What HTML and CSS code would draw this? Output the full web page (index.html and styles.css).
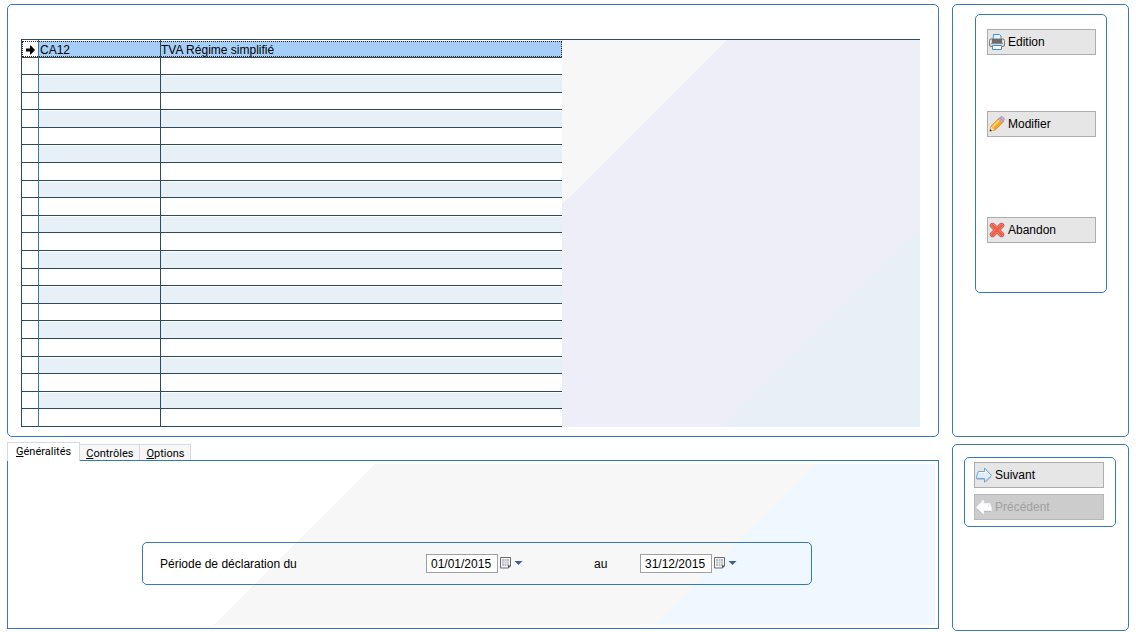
FILE: index.html
```html
<!DOCTYPE html>
<html lang="fr">
<head>
    <meta charset="UTF-8">
    <meta name="viewport" content="width=device-width, initial-scale=1.0">
    <title>Déclaration TVA</title>
    <link rel="stylesheet" href="styles.css">
</head>
<body>
    <main class="window">
        <section class="panel list-panel">
            <div class="list-area">
                <table class="list" aria-label="Déclarations">
                    <colgroup>
                        <col class="col-marker">
                        <col class="col-code">
                        <col class="col-label">
                    </colgroup>
                    <tbody>
                        <tr class="selected">
                            <td>
                                <svg class="marker" viewBox="0 0 10 10" aria-hidden="true"><path d="M1 3.500h4V.5h.8L10 5 5.800 9.500H5v-3H1z"/></svg>
                            </td>
                            <td>CA12</td>
                            <td>TVA Régime simplifié</td>
                        </tr>
                        <tr><td></td><td></td><td></td></tr>
                        <tr><td></td><td></td><td></td></tr>
                        <tr><td></td><td></td><td></td></tr>
                        <tr><td></td><td></td><td></td></tr>
                        <tr><td></td><td></td><td></td></tr>
                        <tr><td></td><td></td><td></td></tr>
                        <tr><td></td><td></td><td></td></tr>
                        <tr><td></td><td></td><td></td></tr>
                        <tr><td></td><td></td><td></td></tr>
                        <tr><td></td><td></td><td></td></tr>
                        <tr><td></td><td></td><td></td></tr>
                        <tr><td></td><td></td><td></td></tr>
                        <tr><td></td><td></td><td></td></tr>
                        <tr><td></td><td></td><td></td></tr>
                        <tr><td></td><td></td><td></td></tr>
                        <tr><td></td><td></td><td></td></tr>
                        <tr><td></td><td></td><td></td></tr>
                        <tr><td></td><td></td><td></td></tr>
                        <tr><td></td><td></td><td></td></tr>
                        <tr><td></td><td></td><td></td></tr>
                        <tr><td></td><td></td><td></td></tr>
                    </tbody>
                </table>
                <div class="list-rest"></div>
            </div>
        </section>

        <aside class="panel actions-panel">
            <div class="panel actions">
                <button type="button" class="btn">
                    <svg class="icon" viewBox="0 0 16 16" aria-hidden="true">
                        <path d="M4.500 .5h6l1.500 1.500V6h-8z" fill="#e4f3ff" stroke="#4d8fc4"/>
                        <rect x=".5" y="5" width="15" height="7.500" rx="1.500" fill="#d6d6d6" stroke="#7c7c7c"/>
                        <path d="M3 5h10v4H3z" fill="#6a6a6a"/>
                        <path d="M2 9.500h12" stroke="#8d8d8d"/>
                        <path d="M3.500 11.500h9v4h-9z" fill="#f4faff" stroke="#4d8fc4"/>
                        <path d="M1.500 6.500v3M14.500 6.500v3" stroke="#f2f2f2"/>
                    </svg>
                    Edition
                </button>
                <button type="button" class="btn edit">
                    <svg class="icon" viewBox="0 0 16 16" aria-hidden="true">
                        <path d="M1 15l1.200-5 8-8 4 4-8 8z" fill="#f9a51c" stroke="#d08220" stroke-width=".8"/>
                        <path d="M3.500 11l7.500-7.500" stroke="#ffd873" stroke-width="1.800"/>
                        <path d="M1 15l1.200-4.500 3.500 3.500z" fill="#f3dfb4"/>
                        <path d="M.6 15.400l.7-2.300 1.600 1.600z" fill="#333"/>
                        <path d="M9.300 3.100l1.500-1.500 3.800 3.800-1.500 1.500z" fill="#b8b8b8" stroke="#8c8c8c" stroke-width=".5"/>
                        <path d="M10.900 1.500L12 .6q.8-.4 1.500.1l1.900 1.900q.5.800-.1 1.500l-.8 1z" fill="#dda0cf" stroke="#a777a0" stroke-width=".5"/>
                    </svg>
                    Modifier
                </button>
                <button type="button" class="btn cancel">
                    <svg class="icon" viewBox="0 0 16 16" aria-hidden="true">
                        <path d="M3.500 3.500l9 9M12.500 3.500l-9 9" stroke="#b94a43" stroke-width="5.400" stroke-linecap="round"/>
                        <path d="M3.500 3.500l9 9M12.500 3.500l-9 9" stroke="#f6a597" stroke-width="4" stroke-linecap="round"/>
                        <path d="M3.500 3.500l9 9M12.500 3.500l-9 9" stroke="#f45b41" stroke-width="3" stroke-linecap="round"/>
                    </svg>
                    Abandon
                </button>
            </div>
        </aside>

        <section class="details">
            <div class="tabs" role="tablist">
                <button type="button" role="tab" class="tab active" aria-selected="true"><u>G</u>énéralités</button>
                <button type="button" role="tab" class="tab" aria-selected="false"><u>C</u>ontrôles</button>
                <button type="button" role="tab" class="tab" aria-selected="false"><u>O</u>ptions</button>
            </div>
            <div class="tab-page" role="tabpanel">
                <form class="panel period">
                    <label for="date-from">Période de déclaration du</label>
                    <div class="date">
                        <input type="text" id="date-from" value="01/01/2015">
                        <button type="button" class="picker" aria-label="Choisir la date de début">
                            <svg viewBox="0 0 24 12" aria-hidden="true">
                                <path d="M.5.500h10v8.500l-2 2h-8z" fill="#f4f4f6" stroke="#70686c"/>
                                <path d="M2 2h7v7H2z" fill="#b9c0cc"/>
                                <path d="M2 4.500h7M2 6.500h7M4.500 2v7M6.500 2v7" stroke="#f4f4f6" stroke-width=".5"/>
                                <path d="M8 11V8.500h3z" fill="#4d4448"/>
                                <path d="M14.500 4h8l-4 4z" fill="#41608f"/>
                            </svg>
                        </button>
                    </div>
                    <label for="date-to">au</label>
                    <div class="date">
                        <input type="text" id="date-to" value="31/12/2015">
                        <button type="button" class="picker" aria-label="Choisir la date de fin">
                            <svg viewBox="0 0 24 12" aria-hidden="true">
                                <path d="M.5.500h10v8.500l-2 2h-8z" fill="#f4f4f6" stroke="#70686c"/>
                                <path d="M2 2h7v7H2z" fill="#b9c0cc"/>
                                <path d="M2 4.500h7M2 6.500h7M4.500 2v7M6.500 2v7" stroke="#f4f4f6" stroke-width=".5"/>
                                <path d="M8 11V8.500h3z" fill="#4d4448"/>
                                <path d="M14.500 4h8l-4 4z" fill="#41608f"/>
                            </svg>
                        </button>
                    </div>
                </form>
            </div>
        </section>

        <aside class="panel nav-panel">
            <div class="panel nav">
                <button type="button" class="btn">
                    <svg class="icon" viewBox="0 0 16 16" aria-hidden="true">
                        <path d="M2.500 4.500Q.5 7.500.5 11.500h8V15L15.500 8.500 8.500 1v3.500z" fill="#dceefc" stroke="#6ea3d2"/>
                        <path d="M3 5.500h6.500V3.500l4.500 5" fill="none" stroke="#fff"/>
                        <path d="M1 12.500h7M9.500 15.500l5.500-5.500" fill="none" stroke="#a9b4bd" stroke-width=".7"/>
                    </svg>
                    Suivant
                </button>
                <button type="button" class="btn" disabled>
                    <svg class="icon" viewBox="0 0 16 16" aria-hidden="true">
                        <path d="M13.500 4.500q2 3 2 7h-8V15L.5 8.500 7.500 1v3.500z" fill="#fff" stroke="#f4f4f8"/>
                        <path d="M12.500 6.500v1M8 12.500h7M1.500 10.500L6.500 15.500" fill="none" stroke="#b4b4bc" stroke-width=".8"/>
                    </svg>
                    Précédent
                </button>
            </div>
        </aside>
    </main>
</body>
</html>
```
FILE: styles.css
```css
* {
    box-sizing: border-box;
}

body {
    margin: 0;
    background: #fff;
    color: #000;
    font-family: "Liberation Sans", Arial, sans-serif;
    font-size: 12px;
    line-height: 14px;
}

button, input {
    font: inherit;
    color: inherit;
}

.window {
    display: grid;
    grid-template-columns: 1fr 177px;
    grid-template-rows: auto 1fr;
    gap: 5px 13px;
    min-height: 100vh;
    padding: 4px 7px 1px;
}

.panel {
    border: 1px solid #3779b5;
    border-radius: 5px;
}

/* List */
.list-panel {
    padding: 34px 18px 9px 13px;
}

.list-area {
    display: flex;
    border-top: 1px solid #2c4a5c;
}

.list {
    table-layout: fixed;
    width: 541px;
    border-collapse: separate;
    border-spacing: 0;
    border-left: 1px solid #2c4a5c;
}

.col-marker {
    width: 17px;
}

.col-code {
    width: 122px;
}

.list td {
    height: 18px;
    padding: 2px 0 0 1px;
    border-bottom: 1px solid #2c4a5c;
    white-space: nowrap;
}

.list tr:nth-child(2) td,
.list tr:nth-child(5n+4) td,
.list tr:nth-child(5n+6) td {
    height: 17px;
}

.list td:first-child {
    border-right: 1px solid #3779b5;
}

.list td:nth-child(2) {
    border-right: 1px solid #2c4a5c;
}

.list td:last-child {
    padding-left: 0;
}

.list tr:nth-child(odd) td:not(:first-child) {
    background: #e7eff7;
    box-shadow: inset 0 1px #fff;
}

.list tr.selected:nth-child(odd) td:not(:first-child) {
    background: #a5cff7;
}

.selected {
    position: relative;
}

/* focus rectangle over the whole row */
.selected td:last-child::after {
    content: "";
    position: absolute;
    inset: 1px 0;
    border: 1px dotted #40200a;
}

.marker {
    display: block;
    width: 10px;
    height: 10px;
    margin-left: 2px;
}

.list-rest {
    flex: 1;
    background: linear-gradient(135deg, #f7f7f7 116px, #eeeef8 116px, #eeeef8 387px, #e7eff7 387px);
}

/* Buttons on the right */
.actions-panel {
    padding: 9px 21px 9px 22px;
}

.actions {
    display: flex;
    flex-direction: column;
    padding: 14px 10px 49px 11px;
}

.btn {
    display: flex;
    align-items: center;
    gap: 3px;
    width: 100%;
    height: 26px;
    padding: 0 1px;
    border: 1px solid #adadad;
    background: #e6e6e6;
}

.btn:disabled {
    border-color: #b9b9b9;
    background: #ccc;
    color: #a0a0a0;
}

.edit {
    margin-top: 56px;
}

.cancel {
    margin-top: 80px;
}

.icon {
    width: 16px;
    height: 16px;
    fill: none;
}

.nav-panel {
    margin-top: 2px;
    padding: 12px 12px 12px 11px;
}

.nav {
    display: flex;
    flex-direction: column;
    gap: 6px;
    padding: 4px 11px 6px 9px;
}

/* Tabs */
.details {
    display: flex;
    flex-direction: column;
    margin-bottom: 2px;
}

.tabs {
    display: flex;
    align-items: flex-end;
    height: 18px;
    z-index: 1;
}

.tab {
    height: 16px;
    padding: 2px 6px 0;
    border: 1px solid #d8d8e2;
    border-bottom: 0;
    border-left: 0;
    background: #f7f7f7;
    font-family: Roboto, sans-serif;
    font-size: 11px;
    line-height: 13px;
}

.tab.active {
    height: 19px;
    margin-bottom: -1px;
    padding: 0 8px 1px;
    border-left: 1px solid #d8d8e2;
    background: #fff;
}

.tab-page {
    flex: 1;
    padding: 81px 126px 43px 134px;
    border: 1px solid #3779b5;
    background: linear-gradient(135deg, #fff 261px, #f7f7f7 261px, #f7f7f7 573px, #eff7ff 573px);
    box-shadow: inset 0 0 0 3px #fff;
}

.period {
    display: grid;
    grid-template-columns: 266px 168px 46px 1fr;
    align-items: center;
    height: 43px;
    padding-left: 17px;
}

.date {
    display: flex;
    gap: 2px;
}

.date input {
    width: 72px;
    height: 19px;
    padding: 1px 4px 0;
    border: 1px solid #a0a0a0;
    background: #fff;
}

.picker {
    width: 24px;
    height: 17px;
    padding: 0;
    border: 0;
    background: none;
}

.picker svg {
    display: block;
    width: 24px;
    height: 12px;
}
```
